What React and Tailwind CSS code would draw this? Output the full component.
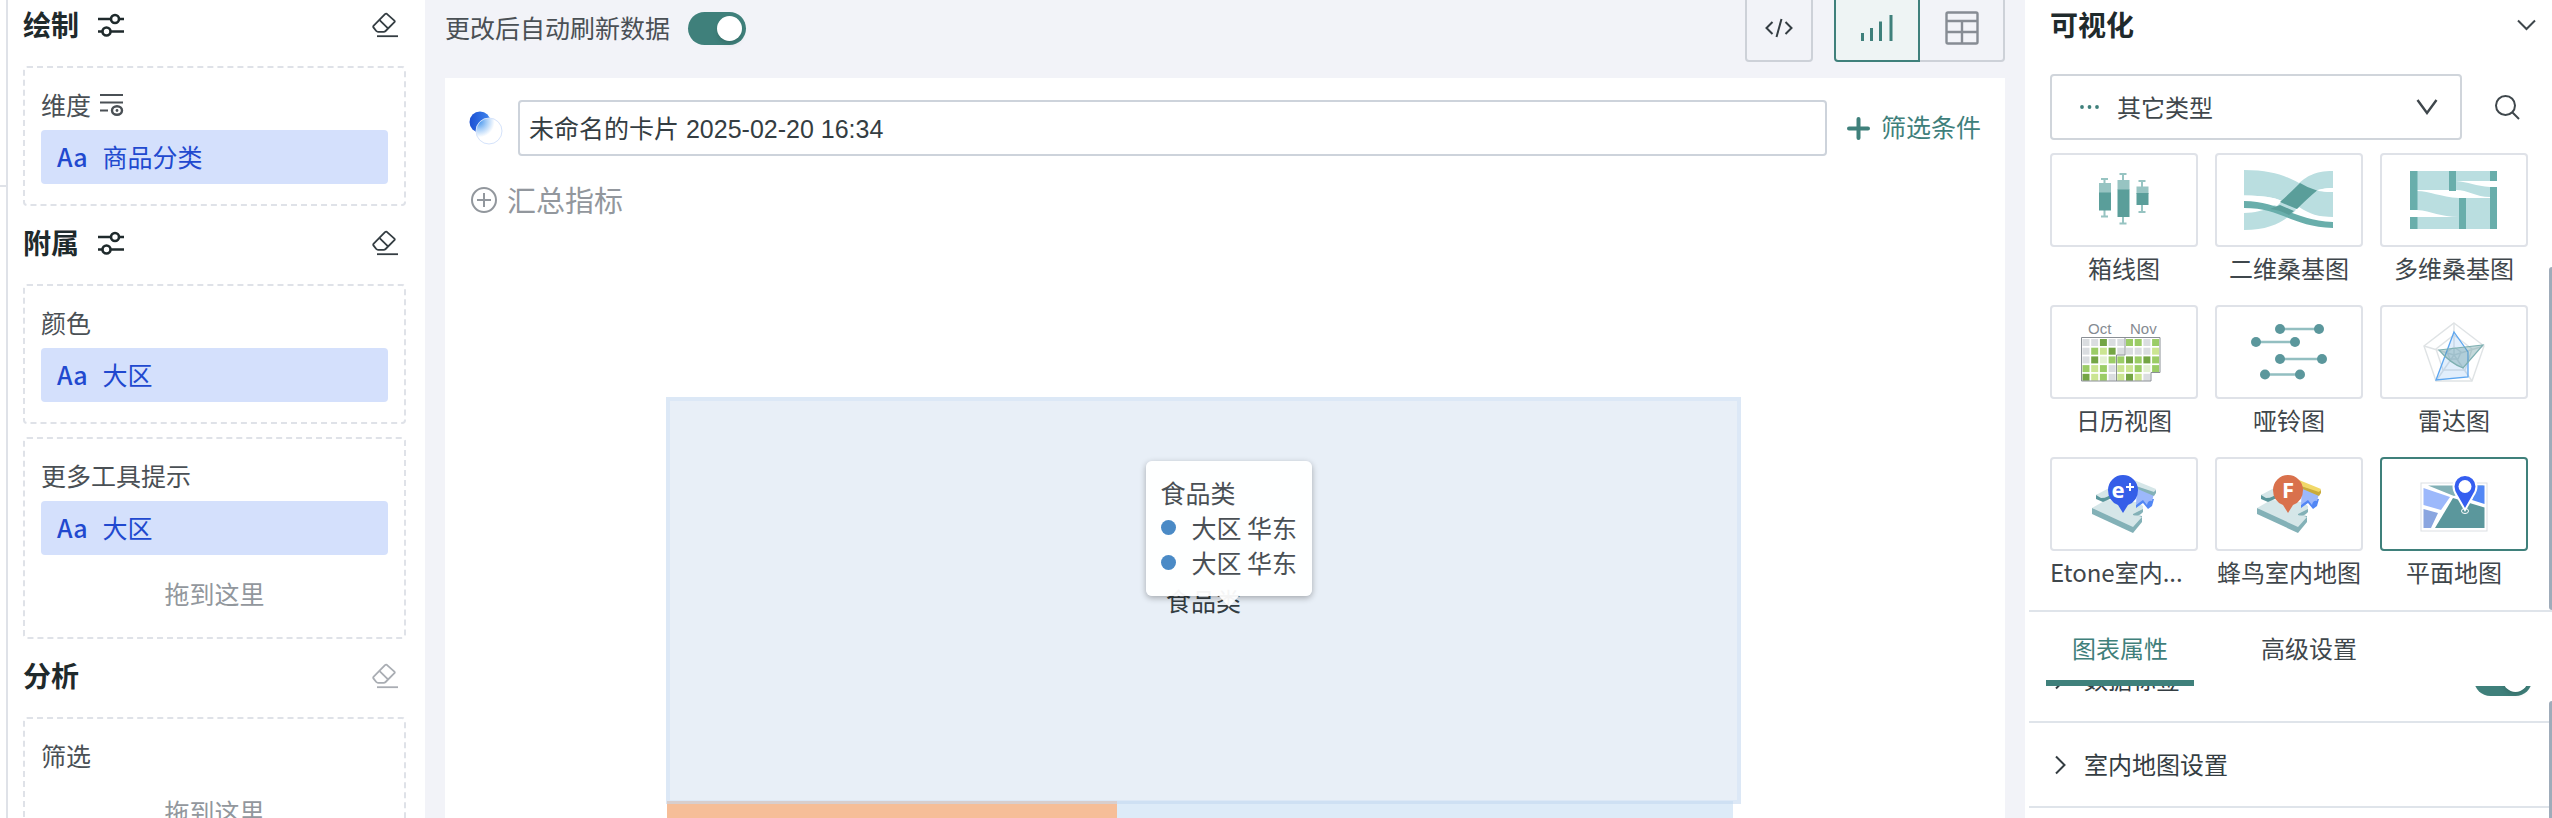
import React, { useState } from 'react';

const SlidersIcon = () => (
  <svg width="28" height="24" viewBox="0 0 28 24" fill="none" stroke="currentColor" strokeWidth="2.6">
    <path d="M1 6h12.5M22 6h5M1 18.5h4.5M13.5 18.5H27" />
    <circle cx="18" cy="6" r="4" />
    <circle cx="9.5" cy="18.5" r="4" />
  </svg>
);

const EraserIcon = () => (
  <svg width="26" height="26" viewBox="0 0 26 26" fill="none" stroke="currentColor" strokeWidth="1.8" strokeLinejoin="round">
    <path d="M14.8 1.8L22.4 8.6Q23.2 9.4 22.4 10.2L13.6 19Q12.8 19.8 11.6 19.8H6Q5 19.8 4.3 19L1.6 15.6Q.8 14.6 1.7 13.7L13 2.1Q14 1.2 14.8 1.8Z" />
    <path d="M7.6 8.2L16 16.4" />
    <path d="M5 24.2H26" />
  </svg>
);

const ListEyeIcon = () => (
  <svg width="24" height="24" viewBox="0 0 24 24" fill="none" stroke="currentColor" strokeWidth="2">
    <path d="M0 2h23M0 9.5h23M0 17.5h8" />
    <ellipse cx="17" cy="17.5" rx="5" ry="4.2" strokeWidth="2.4" />
    <circle cx="17" cy="17.5" r="1.4" fill="currentColor" stroke="none" />
  </svg>
);

const LogoIcon = () => (
  <svg width="34" height="34" viewBox="0 0 34 34">
    <defs>
      <linearGradient id="logoBlue" x1="0" y1="0" x2="1" y2="0">
        <stop offset="0" stopColor="#1c50d3" />
        <stop offset="1" stopColor="#3f86ee" />
      </linearGradient>
      <radialGradient id="logoGlass" cx="0.12" cy="0.14" r="0.6">
        <stop offset="0" stopColor="#4a97ee" />
        <stop offset="0.5" stopColor="#a9cff8" />
        <stop offset="1" stopColor="#ffffff" />
      </radialGradient>
    </defs>
    <circle cx="11" cy="11" r="10.5" fill="url(#logoBlue)" />
    <circle cx="20" cy="20" r="13" fill="url(#logoGlass)" stroke="#d5e3fb" strokeWidth="1" />
  </svg>
);

const BoxPlotArt = () => (
  <svg width="52" height="54" viewBox="0 0 52 54">
    <g stroke="#97c4c2" strokeWidth="2">
      <path d="M3 6h7M6.5 6v38M3 43.5h7M21.500 1h7M25 1v50M21.5 50.5h7M40.5 8h7M44 8v31M40.5 39h7" />
    </g>
    <path fill="#97c4c2" d="M1 10h12v10H1zM19.5 7h12v10h-12zM38.5 13.5h12V21h-12z" />
    <path fill="#5a9e9a" d="M1 19.5h12v18H1zM19.5 16.5h12v27.5h-12zM38.5 20h12v12h-12z" />
  </svg>
);

const SankeyArt = () => (
  <svg width="90" height="60" viewBox="0 0 90 60">
    <path fill="#badee0" d="M0 0C28 0 42 6 55 13C66 20 74 22 89 22V47C66 47 58 42 46 35C32 27 22 26 0 25.5Z" />
    <path fill="#badee0" d="M89 1C70 1 62 7 54 14C36 32 28 42 0 43V60C28 60 42 50 53 39C66 24 72 18 89 18Z" />
    <path fill="#fff" d="M0 25.5C20 26 30 27 38 31L33 36C22 32 14 31 0 31ZM73 20Q80 18 89 18V22Q80 22 73 20ZM51 40L55 37C66 44 74 47 89 47V52C70 51 60 45 51 40Z" />
    <path fill="#5a9e9a" d="M56 13Q64 18 73 20.5Q64 28 53 39Q46 36 36 32Q46 23 56 13Z" />
    <path fill="#69aeab" d="M0 31C36 31 48 50 89 52V58C48 57 38 38 0 38Z" />
    <path fill="#5a9e9a" d="M36 35Q43 38 50 41L45 45Q36 40 26 39Z" />
  </svg>
);

const MultiSankeyArt = () => (
  <svg width="88" height="60" viewBox="0 0 88 60">
    <path fill="#badee0" d="M7 1H80V11H46C58 12 66 16 80 17V27C66 27 58 20 46 20H7ZM7 21C20 21 30 27 49 28V47C30 47 22 41 7 40ZM7 47H49V59H7ZM55 28H80V59H55Z" />
    <path fill="#69aeab" d="M0 1h7.5v39H0zM0 47h7.5v12H0zM39 1h7v20h-7zM49 28h7v31h-7zM80 1h7v10h-7zM80 17h7v42h-7z" />
  </svg>
);

// one digit per day, the digit is the colour level
const CALENDAR = ['003002202', '021300001', '034223232', '212011242', '31201310'];

const CALENDAR_COLORS = { 0: '#dadde0', 1: '#cbe592', 2: '#9bcc66', 3: '#74a544', 4: '#e4f1d3' };

const CalendarArt = () => (
  <svg width="88" height="62" viewBox="0 0 88 62">
    <text x="8" y="13" fontSize="15" fontFamily="Liberation Sans, sans-serif" fill="#858b92">Oct</text>
    <text x="50" y="13" fontSize="15" fontFamily="Liberation Sans, sans-serif" fill="#858b92">Nov</text>
    {CALENDAR.map((row, y) =>
      row.split('').map((level, x) => (
        <rect key={`${x}-${y}`} x={2.5 + x * 8.7} y={18 + y * 8.7} width="7" height="7" fill={CALENDAR_COLORS[level]} />
      ))
    )}
    <path d="M1.5 16.5H80V51.5H71V60H1.5ZM45 16.5V34H36.5V60" fill="none" stroke="#8a8f95" strokeWidth="1" />
  </svg>
);

const DumbbellArt = () => (
  <svg width="78" height="58" viewBox="0 0 78 58">
    <path d="M30 6h40M6 19h40M30 36h42M15 51.5h36" stroke="#93bfc1" strokeWidth="2.4" />
    <g fill="#5b979c">
      <circle cx="30" cy="6" r="5" />
      <circle cx="69" cy="6" r="5" />
      <circle cx="6" cy="19" r="5" />
      <circle cx="45" cy="19" r="5" />
      <circle cx="30" cy="36" r="5" />
      <circle cx="72" cy="36" r="5" />
      <circle cx="15" cy="51.5" r="5" />
      <circle cx="50" cy="51.5" r="5" />
    </g>
  </svg>
);

const RadarArt = () => (
  <svg width="64" height="62" viewBox="0 0 64 62" fill="none">
    <g stroke="#dfe3e5" strokeWidth="1.4">
      <path d="M32 2L62 25L50 60H14L2 25Z" />
      <path d="M32 14L50 28L43 49H21L14 28Z" />
      <path d="M32 26L39 31L36 38H28L25 31Z" />
      <path d="M32 2V34M62 25L32 34M50 60L32 34M14 60L32 34M2 25L32 34" />
    </g>
    <path d="M32 11L46 31V56L14 59Z" fill="#5aa1ee" fillOpacity=".18" stroke="#5ca6f0" strokeWidth="1.3" />
    <path d="M17 29L61 24L41 47Q28 42 17 29Z" fill="#5b979c" fillOpacity=".36" stroke="#7eb0b2" strokeWidth="1.2" />
  </svg>
);

const IndoorMapArt = ({ letter, color, wall, wallSide }) => (
  <svg width="66" height="60" viewBox="0 0 66 60">
    <path fill="#83b1b7" d="M1 34V40L42 59L51 48V42Z" />
    <path fill="#d5e6e8" d="M15 26L1 34L42 53L51 43L42 40L52 38V32L46 28Z" />
    <path fill="#83b1b7" d="M42 40L52 35V38Q48 43 42 41Z" />
    <path fill="#5b979c" d="M5 21V25L12 28L21 24V18Z" />
    <path fill="#d5e6e8" d="M20 13L5 21L10 24Q18 24 21 18Z" />
    <path fill="#5287f5" d="M45 31V34L52 29L57 35L61 32L63 25L50 24Z" />
    <path fill="#9cb8fb" d="M46 10L63 20L61 27Q57 26 56 31L52 26L45 31Z" />
    <path fill={wallSide} d="M42 11L64 17L65 15V19L63 22L42 13Z" />
    <path fill={wall} d="M43 6L65 15L63 18L42 11Z" />
    <path fill={color} d="M32 39L27 31Q17 27 17 16A15 15 0 0 1 47 16Q47 27 37 31Z" />
    <text
      x={letter === 'F' ? 32 : 27}
      y="24"
      textAnchor="middle"
      fontSize="22"
      fontWeight="700"
      fontFamily="Noto Sans, sans-serif"
      fill="#fff"
    >
      {letter}
    </text>
    {letter === 'e' && <path d="M39 9v8M35 13h8" stroke="#fff" strokeWidth="2" />}
  </svg>
);

const FlatMapArt = () => (
  <svg width="68" height="60" viewBox="0 0 68 60">
    <rect x="1" y="9" width="66" height="48" fill="#fff" stroke="#dcdfe3" />
    <path fill="#83b1b7" d="M8 11.5H64L34 22Z" />
    <path fill="#9cb8fb" d="M3.5 14L30 23L21 36L3.5 31Z" />
    <path fill="#8ba6e0" d="M3.5 35L18 39L11 54H3.5Z" />
    <path fill="#5287f5" d="M57 11.5H64.5V30L52 26Z" />
    <path fill="#5b979c" d="M33 24L64.5 33.5V54H15Z" />
    <ellipse cx="45" cy="37" rx="3.5" ry="2.5" fill="none" stroke="#fff" />
    <path fill="#355ef0" stroke="#fff" strokeWidth="2" d="M45 36L37 22Q33.5 17 33.5 12.5A11.5 11.5 0 0 1 56.5 12.5Q56.5 17 53 22Z" />
    <circle cx="45" cy="12.5" r="6.5" fill="#fff" />
  </svg>
);

const CHARTS = [
  { name: '箱线图', art: <BoxPlotArt /> },
  { name: '二维桑基图', art: <SankeyArt /> },
  { name: '多维桑基图', art: <MultiSankeyArt /> },
  { name: '日历视图', art: <CalendarArt /> },
  { name: '哑铃图', art: <DumbbellArt /> },
  { name: '雷达图', art: <RadarArt /> },
  { name: 'Etone室内...', clipped: true, art: <IndoorMapArt letter="e" color="#355ee8" wall="#d5e6e8" wallSide="#83b1b7" /> },
  { name: '蜂鸟室内地图', art: <IndoorMapArt letter="F" color="#d9714c" wall="#f1d868" wallSide="#c9ab3c" /> },
  { name: '平面地图', art: <FlatMapArt /> },
];

const Toggle = ({ label, defaultChecked }) => (
  <label className="relative inline-flex h-[33px] w-[58px] shrink-0 cursor-pointer">
    <input type="checkbox" role="switch" aria-label={label} defaultChecked={defaultChecked} className="peer sr-only" />
    <span className="h-full w-full rounded-full bg-gray-300 peer-checked:bg-[#3f807b]" />
    <span className="absolute top-1 left-1 h-[25px] w-[25px] rounded-full bg-white shadow-md peer-checked:left-[29px]" />
  </label>
);

const SectionHeader = ({ title, sliders, muted }) => (
  <div className="flex h-[78px] items-center justify-between pr-2 pb-1">
    <div className="flex items-center gap-[18px]">
      <h2 className="pb-[3px] text-[28px] font-bold text-[#1f2a2c]">{title}</h2>
      {sliders && (
        <button type="button" aria-label={`${title}设置`} className="text-[#1f2a2c]">
          <SlidersIcon />
        </button>
      )}
    </div>
    <button type="button" aria-label={`清空${title}`} className={muted ? 'text-[#a9adb3]' : 'text-[#343d42]'}>
      <EraserIcon />
    </button>
  </div>
);

const DropZone = ({ label, fields = [], icon, placeholder }) => (
  <div className="rounded-sm border-2 border-dashed border-[#dfe2e8] px-4 pt-4 pb-3">
    <div className="mb-1 flex h-[42px] items-center gap-[9px] text-[#4a5055]">
      <span>{label}</span>
      {icon}
    </div>
    {fields.map((field) => (
      <div key={field} className="mb-2 flex h-[54px] items-center gap-[15px] rounded bg-[#d4e0fc] px-4 text-[#2149cf]">
        <span className="font-medium">Aa</span>
        <span>{field}</span>
      </div>
    ))}
    {placeholder && (
      <div className="flex h-[62px] items-center justify-center text-[#92979d]">拖到这里</div>
    )}
  </div>
);

const FieldPanel = () => (
  <aside className="w-[419px] shrink-0 overflow-hidden border-l-2 border-[#dfe2e8] bg-white pr-[19px] pl-[15px] text-[25px]">
    <div className="-mt-3">
      <SectionHeader title="绘制" sliders />
      <DropZone label="维度" fields={['商品分类']} icon={<ListEyeIcon />} />
      <SectionHeader title="附属" sliders />
      <div className="flex flex-col gap-[13px]">
        <DropZone label="颜色" fields={['大区']} />
        <DropZone label="更多工具提示" fields={['大区']} placeholder />
      </div>
      <SectionHeader title="分析" muted />
      <DropZone label="筛选" placeholder />
    </div>
  </aside>
);

const Tooltip = () => (
  <div className="absolute top-15 left-1/2 ml-[-58px] w-[166px] rounded-md bg-white/95 px-[15px] pt-[14px] pb-4 leading-[35px] text-[#4a5055] shadow-[0_2px_6px_rgba(0,0,0,0.3)]">
    <div>食品类</div>
    {[0, 1].map((i) => (
      <div key={i} className="flex items-center gap-4 whitespace-nowrap">
        <span className="h-[15px] w-[15px] shrink-0 rounded-full bg-[#4a8ac6]" />
        大区 华东
      </div>
    ))}
    <div className="absolute top-full left-1/2 -ml-2.5 border-x-10 border-t-11 border-x-transparent border-t-white/95" />
  </div>
);

const Treemap = () => (
  <div className="relative mt-[177px] mr-[264px] ml-[221px]">
    <div className="relative z-10 flex h-[407px] items-center justify-center border-4 border-[#c5d8f0]/60 bg-[#e8eff7] bg-clip-padding text-[#343d42]">
      食品类
      <Tooltip />
    </div>
    <div className="-mt-[3px] mr-2 ml-px flex h-40">
      <div className="w-[42.2%] bg-[#f6be98]" />
      <div className="flex-1 bg-[#ddebf8]" />
    </div>
  </div>
);

const Workspace = () => {
  const [cardName, setCardName] = useState('未命名的卡片 2025-02-20 16:34');

  return (
    <main className="flex min-w-0 flex-1 flex-col overflow-hidden bg-[#f2f3f8] px-5 text-[25px]">
      <div className="-mt-1.5 mb-4 flex h-[68px] shrink-0 items-center">
        <span className="text-[#4a5055]">更改后自动刷新数据</span>
        <div className="ml-[18px] flex">
          <Toggle label="更改后自动刷新数据" defaultChecked />
        </div>
        <button type="button" aria-label="代码" className="ml-auto flex h-[68px] w-[68px] items-center justify-center rounded border-2 border-[#cdd1d8] text-[#343d42]">
          <svg width="28" height="20" viewBox="0 0 28 20" fill="none" stroke="currentColor" strokeWidth="2">
            <path d="M7.5 4L1.5 10L7.5 16M20.5 4L26.5 10L20.5 16M16.5 1L11.5 19" />
          </svg>
        </button>
        <div className="ml-[21px] flex h-[68px]">
          <button type="button" aria-label="图表" className="flex w-[86px] items-center justify-center rounded-l border-2 border-[#3f807b] bg-[#eef4f4]">
            <svg width="32" height="28" viewBox="0 0 32 28" fill="#3f807b">
              <path d="M0 19h3v8H0zM9 14h3v13H9zM18 7.5h3V27h-3zM28.5 1h3v26h-3z" />
            </svg>
          </button>
          <button type="button" aria-label="表格" className="flex w-[85px] items-center justify-center rounded-r border-2 border-l-0 border-[#cdd1d8]">
            <svg width="34" height="34" viewBox="0 0 34 34" fill="none" stroke="#878c94" strokeWidth="2.4">
              <rect x="1.5" y="1.5" width="31" height="31" rx="1.5" />
              <path d="M1.5 10h31M1.5 21h31M17 10v22" />
            </svg>
          </button>
        </div>
      </div>

      <section className="flex-1 bg-white">
        <div className="flex items-center px-6 pt-[22px]">
          <LogoIcon />
          <input
            type="text"
            aria-label="卡片名称"
            value={cardName}
            onChange={(e) => setCardName(e.target.value)}
            className="ml-[15px] h-14 min-w-0 flex-1 rounded border-2 border-[#cdd3db] bg-white px-[9px] pb-0.5 font-['Liberation_Sans','Noto_Sans_CJK_SC',sans-serif] text-[#343d42] outline-none"
          />
          <button type="button" className="ml-5 flex items-center gap-[11px] text-[#3f807b]">
            <svg width="23" height="23" viewBox="0 0 23 23" stroke="currentColor" strokeWidth="4" strokeLinecap="round">
              <path d="M2 11.5h19M11.5 2v19" />
            </svg>
            <span className="pb-0.5">筛选条件</span>
          </button>
        </div>
        <button type="button" className="mt-6 ml-[26px] flex h-10 items-center gap-[10px] text-[29px] text-[#92979d]">
          <svg width="26" height="26" viewBox="0 0 26 26" fill="none" stroke="currentColor" strokeWidth="2">
            <circle cx="13" cy="13" r="12" />
            <path d="M6 13h14M13 6v14" />
          </svg>
          汇总指标
        </button>
        <Treemap />
      </section>
    </main>
  );
};

const SettingRow = ({ label, children }) => (
  <div className="flex h-[85px] items-center border-b-2 border-[#dfe4ea] pr-5 pl-[26px]">
    <button type="button" className="flex flex-1 items-center gap-[18px] text-left text-[#343d42]">
      <svg width="11" height="20" viewBox="0 0 11 20" fill="none" stroke="currentColor" strokeWidth="2">
        <path d="M1 1.5L9.5 10L1 18.5" />
      </svg>
      <span className="pb-0.5">{label}</span>
    </button>
    {children}
  </div>
);

const ChartPanel = () => {
  const [active, setActive] = useState('平面地图');

  return (
    <aside className="flex w-[527px] shrink-0 flex-col overflow-hidden bg-white pl-1 text-[24px] text-[#3f474c]">
      <div className="relative border-b-2 border-[#dfe4ea] pr-6 pb-[17px] pl-[21px]">
        <div className="mb-6 -mr-2 flex h-[50px] items-center justify-between">
          <h2 className="pb-[3px] text-[28px] font-bold text-[#1f2a2c]">可视化</h2>
          <button type="button" aria-label="收起">
            <svg width="19" height="12" viewBox="0 0 19 12" fill="none" stroke="currentColor" strokeWidth="2">
              <path d="M1 1.5L9.5 10L18 1.5" />
            </svg>
          </button>
        </div>

        <div className="mb-[13px] flex items-center">
          <div className="relative h-[66px] w-[412px]">
            <select aria-label="图表类型" className="h-full w-full appearance-none rounded border-2 border-[#d0d5db] bg-white pl-[65px]">
              <option>其它类型</option>
            </select>
            <svg className="pointer-events-none absolute top-[30px] left-[30px]" width="20" height="6" viewBox="0 0 20 6" fill="#3f807b">
              <circle cx="2" cy="3" r="1.9" />
              <circle cx="9.5" cy="3" r="1.9" />
              <circle cx="17" cy="3" r="1.9" />
            </svg>
            <svg className="pointer-events-none absolute top-[25px] right-6" width="22" height="16" viewBox="0 0 22 16" fill="none" stroke="currentColor" strokeWidth="2.4">
              <path d="M1.5 1L11 14L20.5 1" />
            </svg>
          </div>
          <button type="button" aria-label="搜索" className="ml-[33px]">
            <svg width="25" height="25" viewBox="0 0 25 25" fill="none" stroke="currentColor" strokeWidth="2">
              <circle cx="10.5" cy="10.5" r="9.5" />
              <path d="M17 17L24 24" />
            </svg>
          </button>
        </div>

        <div className="grid grid-cols-3 gap-x-[17px] gap-y-4">
          {CHARTS.map(({ name, art, clipped }) => (
            <button key={name} type="button" onClick={() => setActive(name)} className="flex min-w-0 flex-col items-center">
              <span
                className={`flex h-[94px] w-full items-center justify-center rounded border-2 ${
                  active === name ? 'border-[#3f807b]' : 'border-[#dfe2e8]'
                }`}
              >
                {art}
              </span>
              <span className={`leading-[42px] whitespace-nowrap ${clipped ? 'self-start' : ''}`}>{name}</span>
            </button>
          ))}
        </div>
        <div className="absolute top-[267px] right-0 bottom-0 w-[3px] rounded-l bg-[#9facba]" />
      </div>

      <div className="relative z-10 flex h-[74px] shrink-0 bg-white pl-[17px]">
        <button type="button" className="w-[148px] border-b-6 border-[#3f807b] pt-1 text-[#3f807b]">图表属性</button>
        <button type="button" className="ml-[41px] w-[148px] border-b-6 border-transparent pt-1">高级设置</button>
      </div>

      <div className="relative min-h-0 flex-1 overflow-hidden">
        <div className="-mt-12">
          <SettingRow label="数据标签">
            <Toggle label="数据标签" defaultChecked />
          </SettingRow>
          <SettingRow label="室内地图设置" />
        </div>
        <div className="absolute top-[15px] right-0 bottom-0 w-[3px] rounded-tl bg-[#9facba]" />
      </div>
    </aside>
  );
};

export default function App() {
  return (
    <div className="flex h-screen overflow-hidden bg-white font-['Noto_Sans_CJK_SC',sans-serif]">
      <div className="h-[187px] w-1.5 shrink-0 border-b-2 border-[#dfe2e8]" />
      <FieldPanel />
      <Workspace />
      <ChartPanel />
    </div>
  );
}
